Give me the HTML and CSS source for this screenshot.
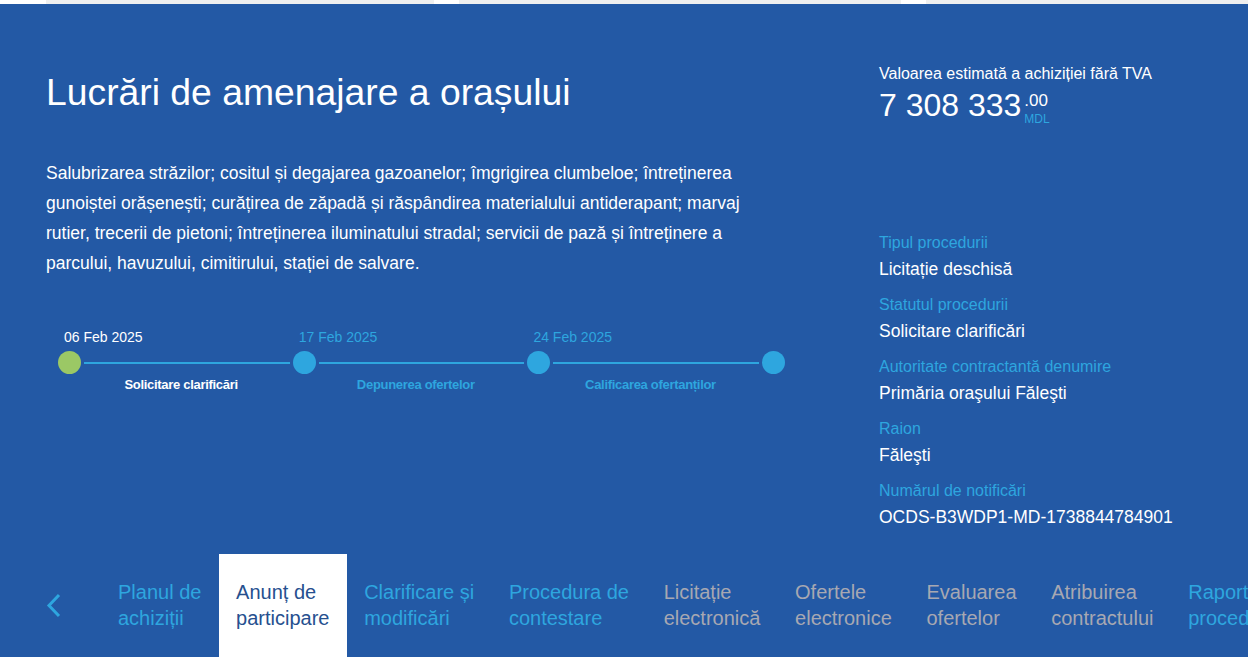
FILE: index.html
```html
<!DOCTYPE html>
<html lang="ro">
<head>
<meta charset="utf-8">
<title>Lucrări de amenajare a orașului</title>
<link rel="stylesheet" href="styles.css">
</head>
<body>
<div class="topstrip">
  <span class="seg white w46"></span>
  <span class="seg gray w388"></span>
  <span class="seg white w25"></span>
  <span class="seg gray w442"></span>
  <span class="seg white w25"></span>
  <span class="seg gray grow"></span>
</div>
<div class="page">
  <div class="hero">
    <div class="left">
      <h1 class="title">Lucrări de amenajare a orașului</h1>
      <p class="desc">Salubrizarea străzilor; cositul și degajarea gazoanelor; îmgrigirea clumbeloe; întreținerea gunoiștei orășenești; curățirea de zăpadă și răspândirea materialului antiderapant; marvaj rutier, trecerii de pietoni; întreținerea iluminatului stradal; servicii de pază și întreținere a parcului, havuzului, cimitirului, stației de salvare.</p>
      <div class="timeline">
        <div class="step done">
          <div class="date">06 Feb 2025</div>
          <div class="track"><span class="dot"></span><span class="line"></span></div>
          <div class="label">Solicitare clarificări</div>
        </div>
        <div class="step">
          <div class="date">17 Feb 2025</div>
          <div class="track"><span class="dot"></span><span class="line"></span></div>
          <div class="label">Depunerea ofertelor</div>
        </div>
        <div class="step">
          <div class="date">24 Feb 2025</div>
          <div class="track"><span class="dot"></span><span class="line"></span></div>
          <div class="label">Calificarea ofertanților</div>
        </div>
        <div class="step last">
          <div class="date">&nbsp;</div>
          <div class="track"><span class="dot"></span></div>
        </div>
      </div>
    </div>
    <div class="right">
      <div class="est-label">Valoarea estimată a achiziției fără TVA</div>
      <div class="amount">
        <span class="amount-main">7 308 333</span><span class="amount-side"><span class="cents">.00</span><span class="cur">MDL</span></span>
      </div>
      <dl class="fields">
        <dt>Tipul procedurii</dt>
        <dd>Licitație deschisă</dd>
        <dt>Statutul procedurii</dt>
        <dd>Solicitare clarificări</dd>
        <dt>Autoritate contractantă denumire</dt>
        <dd>Primăria oraşului Făleşti</dd>
        <dt>Raion</dt>
        <dd>Făleşti</dd>
        <dt>Numărul de notificări</dt>
        <dd>OCDS-B3WDP1-MD-1738844784901</dd>
      </dl>
    </div>
  </div>
  <nav class="tabs">
    <span class="prev"><svg width="16" height="25" viewBox="0 0 16 25"><path d="M13 2 L3 12.5 L13 23" fill="none" stroke="#2ea6df" stroke-width="3"/></svg></span>
    <a class="tab blue">Planul de<br>achiziții</a>
    <a class="tab active">Anunț de<br>participare</a>
    <a class="tab blue">Clarificare și<br>modificări</a>
    <a class="tab blue">Procedura de<br>contestare</a>
    <a class="tab grey">Licitație<br>electronică</a>
    <a class="tab grey">Ofertele<br>electronice</a>
    <a class="tab grey">Evaluarea<br>ofertelor</a>
    <a class="tab grey">Atribuirea<br>contractului</a>
    <a class="tab blue">Raport privind<br>procedura</a>
  </nav>
</div>
</body>
</html>
```
FILE: styles.css
```css
html, body {
  margin: 0;
  padding: 0;
  overflow: hidden;
}
body {
  width: 1248px;
  height: 657px;
  font-family: "Liberation Sans", Arial, sans-serif;
  background: #2359a5;
  color: #ffffff;
}
.topstrip {
  display: flex;
  height: 4px;
}
.seg { display: block; height: 4px; }
.seg.white { background: #ffffff; }
.seg.gray { background: #efefef; }
.w46 { width: 46px; }
.w388 { width: 388px; }
.w25 { width: 25px; }
.w442 { width: 442px; }
.grow { flex: 1; }

.page {
  background: #2359a5;
}
.hero {
  display: flex;
  padding-left: 46px;
  height: 550px;
}
.left {
  width: 833px;
  padding-top: 66px;
}
.title {
  margin: 0;
  font-weight: normal;
  font-size: 37.3px;
  line-height: 44px;
}
.desc {
  margin: 44px 0 0;
  width: 708px;
  font-size: 17.5px;
  line-height: 30px;
}
.timeline {
  display: flex;
  margin-top: 50px;
  margin-left: 12px;
}
.step {
  width: 234.7px;
  display: flex;
  flex-direction: column;
}
.step.last { width: 23px; }
.date {
  font-size: 14px;
  line-height: 18px;
  padding-left: 6px;
  color: #2ea6df;
  white-space: nowrap;
}
.track {
  display: flex;
  align-items: center;
  height: 23px;
  margin-top: 5px;
}
.dot {
  width: 23px;
  height: 23px;
  border-radius: 50%;
  background: #2ea6df;
  flex: none;
}
.line {
  flex: 1;
  height: 2px;
  margin: 0 3px;
  background: #2ea6df;
}
.label {
  margin-left: 11.5px;
  margin-top: 3px;
  text-align: center;
  font-size: 13px;
  line-height: 16px;
  font-weight: bold;
  color: #2ea6df;
  letter-spacing: -0.3px;
}
.step.done .dot { background: #9bc865; }
.step.done .date,
.step.done .label { color: #ffffff; }

.right {
  flex: 1;
  padding-top: 60px;
}
.est-label {
  font-size: 16px;
  line-height: 20px;
}
.amount {
  display: flex;
  align-items: flex-start;
  margin-top: 3px;
}
.amount-main {
  font-size: 32px;
  line-height: 36px;
}
.amount-side {
  display: flex;
  flex-direction: column;
  margin-top: 6px;
  margin-left: 3px;
}
.cents {
  font-size: 17px;
  line-height: 16px;
}
.cur {
  font-size: 12px;
  line-height: 13px;
  margin-top: 4px;
  color: #2ea6df;
}
.fields {
  margin: 107px 0 0;
}
.fields dt {
  font-size: 16px;
  line-height: 20px;
  color: #2ea6df;
}
.fields dd {
  margin: 5px 0 15px;
  font-size: 17.5px;
  line-height: 22px;
}

.tabs {
  display: flex;
  align-items: flex-start;
  padding-left: 46px;
  white-space: nowrap;
}
.prev {
  width: 55px;
  padding-top: 39px;
  flex: none;
}
.prev svg { display: block; }
.tab {
  display: block;
  padding: 25px 17.7px 30px 17px;
  font-size: 20px;
  line-height: 26px;
  flex: none;
}
.tab.blue { color: #2ea6df; }
.tab.grey { color: #a7a8b2; }
.tab.active {
  background: #ffffff;
  color: #26508f;
}
```
